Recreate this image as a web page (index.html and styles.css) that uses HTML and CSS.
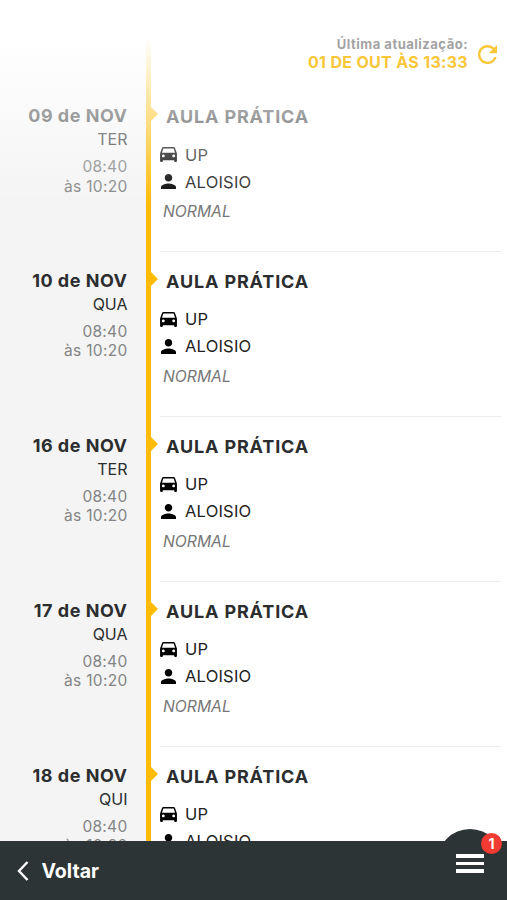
FILE: index.html
```
<!DOCTYPE html>
<html lang="pt-BR">
<head>
    <meta charset="UTF-8">
    <meta name="viewport" content="width=device-width, initial-scale=1.0">
    <title>Agenda de Aulas</title>
    <link rel="stylesheet" href="styles.css">
</head>
<body>
    <svg class="symbols">
        <symbol id="car" viewBox="3 4 18 16">
            <path d="M18.92 5.01C18.72 4.42 18.16 4 17.5 4h-11c-.66 0-1.21.42-1.42 1.01L3 11v8c0 .55.45 1 1 1h1c.55 0 1-.45 1-1v-1h12v1c0 .55.45 1 1 1h1c.55 0 1-.45 1-1v-8l-2.08-5.99zM6.5 15c-.83 0-1.5-.67-1.5-1.5S5.67 12 6.5 12s1.5.67 1.5 1.5S7.33 15 6.5 15zm11 0c-.83 0-1.5-.67-1.5-1.5s.67-1.5 1.5-1.5 1.5.67 1.5 1.5-.67 1.5-1.5 1.5zM5 10l1.5-4.5h11L19 10H5z"/>
        </symbol>
        <symbol id="person" viewBox="4 4 16 16">
            <path d="M12 12c2.21 0 4-1.79 4-4s-1.79-4-4-4-4 1.79-4 4 1.79 4 4 4zm0 2c-2.67 0-8 1.34-8 4v2h16v-2c0-2.66-5.33-4-8-4z"/>
        </symbol>
    </svg>

    <div class="agenda" id="agenda"></div>

    <div class="header">
        <div class="update">
            <div class="update-label">Última atualização:</div>
            <div class="update-date">01 DE OUT ÀS 13:33</div>
        </div>
        <svg class="refresh" viewBox="4 4 16 16">
            <path d="M17.65 6.35C16.2 4.9 14.21 4 12 4c-4.42 0-7.99 3.58-7.99 8s3.57 8 7.99 8c3.73 0 6.84-2.55 7.73-6h-2.08c-.82 2.33-3.04 4-5.65 4-3.31 0-6-2.69-6-6s2.69-6 6-6c1.66 0 3.14.69 4.22 1.78L13 11h7V4l-2.35 2.35z"/>
        </svg>
    </div>

    <div class="footer">
        <div class="back">
            <svg viewBox="0 0 12 20"><path d="M10.5 1L2 10l8.500 9"/></svg>
            <span>Voltar</span>
        </div>
        <div class="menu">
            <div class="menu-lines"><i></i><i></i><i></i></div>
            <div class="badge">1</div>
        </div>
    </div>

    <script>
        const aulas = [
            { dia: '09', semana: 'TER' },
            { dia: '10', semana: 'QUA' },
            { dia: '16', semana: 'TER' },
            { dia: '17', semana: 'QUA' },
            { dia: '18', semana: 'QUI' }
        ];

        const agenda = document.getElementById('agenda');
        aulas.forEach(aula => {
            const item = document.createElement('div');
            item.className = 'item';
            item.innerHTML = `
                <div class="when">
                    <div class="date">${aula.dia} de NOV</div>
                    <div class="weekday">${aula.semana}</div>
                    <div class="time">08:40</div>
                    <div class="time">às 10:20</div>
                </div>
                <div class="details">
                    <h2>AULA PRÁTICA</h2>
                    <div class="info"><svg class="car"><use href="#car"/></svg><span>UP</span></div>
                    <div class="info"><svg class="person"><use href="#person"/></svg><span>ALOISIO</span></div>
                    <div class="type">NORMAL</div>
                </div>
            `;
            agenda.appendChild(item);
        });
    </script>
</body>
</html>
```
FILE: styles.css
```
* {
    box-sizing: border-box;
}
body {
    margin: 0;
    height: 900px;
    overflow: hidden;
    display: flex;
    flex-direction: column;
    position: relative;
    background: #fff;
    font-family: Inter, "Liberation Sans", sans-serif;
    color: #2b2d2e;
}
.symbols {
    display: none;
}
.agenda {
    height: 841px;
    flex-shrink: 0;
    padding-top: 87px;
    overflow: hidden;
    background: linear-gradient(to right, #f4f4f4 146px, #ffbb05 146px, #ffbb05 151px, #fff 151px);
}
.item {
    display: flex;
    height: 164.9px;
}
.when {
    width: 127.5px;
    padding-top: 17px;
    text-align: right;
    white-space: nowrap;
}
.date {
    font-size: 18px;
    line-height: 24px;
    font-weight: 650;
    letter-spacing: 0.5px;
}
.weekday {
    font-size: 16px;
    line-height: 23px;
}
.time {
    font-size: 15.5px;
    line-height: 19.5px;
    color: #838485;
    letter-spacing: 0.3px;
}
.weekday + .time {
    margin-top: 6px;
}
.details {
    position: relative;
    flex: 1;
    margin: 0 6px 0 32.5px;
    padding-top: 17px;
    border-bottom: 1px solid #ececec;
}
/* arrow on the timeline */
.details::before {
    content: "";
    position: absolute;
    left: -9px;
    top: 20px;
    border: 7px solid transparent;
    border-left-color: #ffbb05;
    border-right: 0;
}
.details h2 {
    margin: 0 0 12px 6px;
    font-size: 18px;
    line-height: 25px;
    font-weight: 650;
    letter-spacing: 0.85px;
}
.info {
    display: flex;
    align-items: center;
    height: 27px;
    font-size: 16.5px;
    letter-spacing: 0.2px;
    color: #222;
}
.info svg {
    margin-right: 8px;
    fill: #000;
}
.car {
    width: 17px;
    height: 15px;
}
.info .person {
    width: 15px;
    height: 15px;
    margin-right: 9.5px;
    margin-left: 0.5px;
}
.type {
    margin: 6px 0 0 3px;
    font-size: 15.7px;
    line-height: 21px;
    font-style: italic;
    color: #777;
}
.header {
    position: absolute;
    top: 0;
    left: 0;
    right: 0;
    height: 210px;
    padding: 36px 10px 0 0;
    display: flex;
    justify-content: flex-end;
    align-items: flex-start;
    background: linear-gradient(to bottom, #fff 38px, rgba(255, 255, 255, 0) 205px);
}
.update {
    text-align: right;
    font-weight: 700;
    white-space: nowrap;
}
.update-label {
    font-size: 13px;
    line-height: 17px;
    font-weight: 650;
    color: #a3a3a3;
    letter-spacing: 0.5px;
}
.update-date {
    font-size: 16px;
    line-height: 18px;
    color: #f9c638;
    letter-spacing: 0.32px;
}
.refresh {
    width: 19px;
    height: 19px;
    margin: 9px 0 0 10px;
    fill: #f9c638;
}
.footer {
    display: flex;
    justify-content: space-between;
    align-items: flex-start;
    height: 59px;
    position: relative;
    background: #2d3436;
    color: #fff;
}
.back {
    display: flex;
    align-items: center;
    height: 59px;
    padding-left: 17px;
    font-size: 19.5px;
    font-weight: 700;
}
.back svg {
    width: 12px;
    height: 20px;
    margin-right: 12.5px;
    fill: none;
    stroke: #fff;
    stroke-width: 2.4;
}
.menu {
    position: relative;
    width: 66px;
    height: 66px;
    margin: -12px 4px 0 0;
    padding-top: 25px;
    border-radius: 50%;
    background: #2d3436;
}
.menu-lines {
    width: 28px;
    margin: 0 auto;
}
.menu-lines i {
    display: block;
    height: 3.5px;
    margin-bottom: 4px;
    background: #fff;
}
.badge {
    position: absolute;
    left: 44px;
    top: 4px;
    width: 21px;
    height: 21px;
    border-radius: 50%;
    background: #f13a32;
    font-size: 14px;
    line-height: 21px;
    font-weight: 700;
    text-align: center;
}
```
